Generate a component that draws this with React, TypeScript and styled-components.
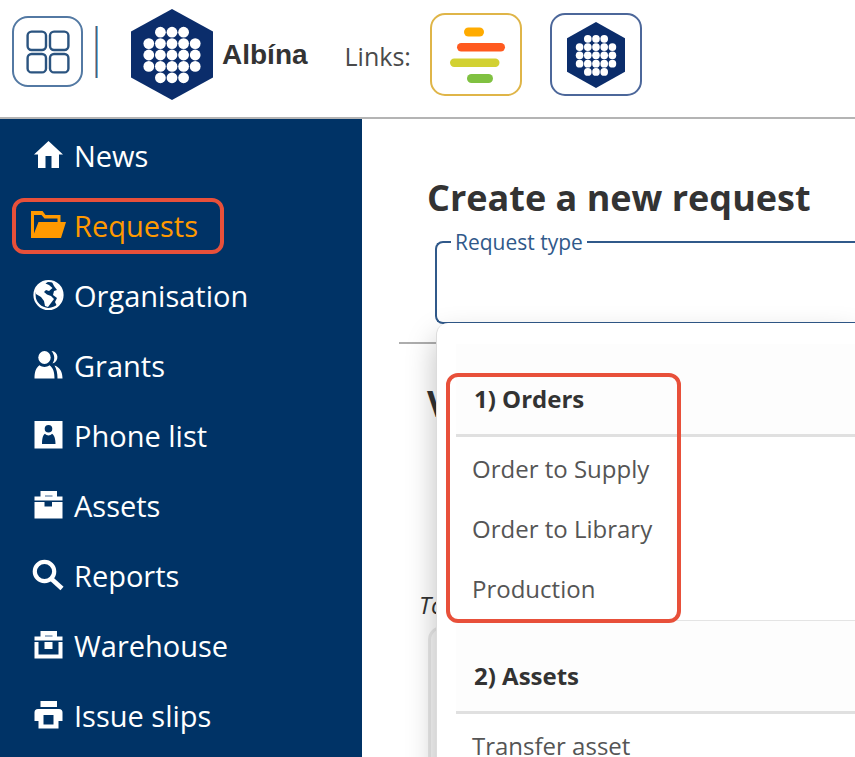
import React from 'react';
import styled, { createGlobalStyle } from 'styled-components';

const NAVY = '#003366';
const LINE_BLUE = '#30598a';
const MARK = '#e8503a';

const GlobalStyle = createGlobalStyle`
  * { box-sizing: border-box; }
  html, body { margin: 0; }
  body {
    background: #fff;
    color: #333;
    font-family: "Open Sans", "Noto Sans", sans-serif;
    overflow: hidden;
  }
`;

const Page = styled.div`
  height: 100vh;
  display: flex;
  flex-direction: column;
`;

const Header = styled.header`
  display: flex;
  align-items: center;
  padding: 9px 12px 17px;
  border-bottom: 2px solid #b4b4b4;
  flex-shrink: 0;
`;

const HeaderGroup = styled.div<{ $gap: number; $before?: number; $lift?: number }>`
  display: flex;
  align-items: center;
  gap: ${(p) => p.$gap}px;
  margin-left: ${(p) => p.$before ?? 0}px;
  padding-bottom: ${(p) => p.$lift ?? 0}px;
`;

const AppsButton = styled.button`
  display: grid;
  place-items: center;
  width: 71px;
  height: 71px;
  padding: 0;
  background: #fff;
  border: 2px solid #5379a3;
  border-radius: 16px;
`;

const Divider = styled.span`
  width: 3px;
  height: 52px;
  background: #45617f;
  border-left: 1px solid #cba394;
  border-right: 1px solid #5fb4e6;
`;

const Brand = styled.strong`
  font: bold 28px/36px "Liberation Sans", Arial, sans-serif;
`;

const LinksLabel = styled.span`
  padding-top: 2px;
  font-size: 25px;
  line-height: 36px;
  color: #4a4a4a;
`;

const LinkTile = styled.a<{ $tone: string }>`
  display: grid;
  place-items: center;
  width: 92px;
  height: 83px;
  border: 2px solid ${(p) => p.$tone};
  border-radius: 15px;
`;

const Body = styled.div`
  display: flex;
  flex: 1;
  min-height: 0;
`;

const Sidebar = styled.nav`
  width: 362px;
  flex-shrink: 0;
  padding: 9px 12px;
  background: ${NAVY};
  overflow: hidden;
`;

const NavList = styled.ul`
  display: flex;
  flex-direction: column;
  align-items: flex-start;
  gap: 14px;
  margin: 0;
  padding: 0;
  list-style: none;
`;

const NavLink = styled.a<{ $active?: boolean }>`
  display: flex;
  align-items: center;
  gap: 8px;
  height: 56px;
  padding: 0 22px 0 15px;
  border: 4px solid ${(p) => (p.$active ? MARK : 'transparent')};
  border-radius: 12px;
  color: ${(p) => (p.$active ? '#ff9900' : '#fff')};
  font-size: 29px;
  line-height: 40px;
  text-decoration: none;
  white-space: nowrap;

  svg { flex-shrink: 0; margin-bottom: 2px; }
`;

const Main = styled.main`
  position: relative;
  flex: 1;
  min-width: 0;
  padding: 54px 0 0 37px;
  overflow: hidden;
`;

const Title = styled.h1`
  margin: 0 0 0 28px;
  font-size: 36px;
  line-height: 50px;
  white-space: nowrap;
`;

const Field = styled.fieldset`
  height: 93px;
  margin: 8px 0 0 36px;
  padding: 0 0 0 14px;
  border: 2px solid ${LINE_BLUE};
  border-right: 0;
  border-radius: 8px 0 0 8px;
`;

const Legend = styled.legend`
  padding: 0 4px;
  color: ${LINE_BLUE};
  font-size: 21px;
  line-height: 22px;
`;

const RequestInput = styled.input`
  width: 100%;
  height: 60px;
  padding: 0;
  border: 0;
  outline: 0;
  background: transparent;
  color: #333;
  font: 24px/32px "Open Sans", sans-serif;
`;

const Rule = styled.hr`
  height: 2px;
  margin: 18px 0 0;
  border: 0;
  background: #adadad;
`;

const SectionTitle = styled.h2`
  margin: 35px 0 0 28px;
  font-size: 36px;
  line-height: 50px;
`;

const Total = styled.p`
  margin: 160px 0 0 20px;
  font-size: 24px;
  line-height: 32px;
  font-style: italic;
`;

const Card = styled.section`
  height: 200px;
  margin: 5px 0 0 29px;
  border: 3px solid #e9e9e9;
  border-radius: 14px;
  background: #f8f8f8;
`;

const Dropdown = styled.div`
  position: absolute;
  top: 204px;
  left: 74px;
  right: 0;
  padding: 21px 0 0 19px;
  background: #fff;
  border-left: 1px solid #dcdcdc;
  border-radius: 12px 0 0 0;
  box-shadow: 0 14px 30px rgba(0, 0, 0, 0.25);
`;

const Group = styled.section`
  position: relative;
  border-bottom: 1px solid #e4e4e4;
`;

const GroupTitle = styled.h3`
  margin: 0;
  padding: 39px 0 19px 18px;
  background: #fdfdfd;
  border-bottom: 3px solid #e0e0e0;
  font-size: 24px;
  line-height: 32px;
`;

const Options = styled.ul`
  margin: 0;
  padding: 2px 0 1px;
  list-style: none;
`;

const Option = styled.button`
  display: block;
  width: 100%;
  height: 60px;
  padding: 0 0 0 16px;
  border: 0;
  background: transparent;
  color: #555;
  font: 24px/32px "Open Sans", sans-serif;
  text-align: left;
  white-space: nowrap;
`;

const GroupMark = styled.span`
  position: absolute;
  z-index: 1;
  inset: 29px auto -3px -10px;
  width: 235px;
  border: 4px solid ${MARK};
  border-radius: 12px;
  pointer-events: none;
`;

const HEX_DOTS = [-2, -1, 0, 1, 2].flatMap((r) =>
  [-2, -1, 0, 1, 2].filter((c) => Math.abs(r) < 2 || Math.abs(c) < 2).map((c) => [c, r])
);

function HexLogo({ width, height }: { width: number; height: number }) {
  return (
    <svg width={width} height={height} viewBox="0 0 82 91" preserveAspectRatio="none" aria-hidden="true">
      <path d="M41 0 82 22.5V68.5L41 91 0 68.5V22.5Z" fill="#0b2d6b" />
      {HEX_DOTS.map(([c, r]) => (
        <circle key={`${c}:${r}`} cx={41 + c * 11.6} cy={46 + r * 11.4} r="5.4" fill="#fff" />
      ))}
    </svg>
  );
}

function AppsIcon() {
  return (
    <svg width="44" height="44" viewBox="0 0 44 44" fill="none" stroke="#2b5480" strokeWidth="2.4" aria-hidden="true">
      <rect x="1.6" y="1.6" width="18.4" height="18.4" rx="4" />
      <rect x="24" y="1.6" width="18.4" height="18.4" rx="4" />
      <rect x="1.6" y="24" width="18.4" height="18.4" rx="4" />
      <rect x="24" y="24" width="18.4" height="18.4" rx="4" />
    </svg>
  );
}

function BarsLogo() {
  return (
    <svg width="60" height="56" viewBox="0 0 60 56" aria-hidden="true">
      <rect x="18" y="0.5" width="20" height="9" rx="4.5" fill="#ffab00" />
      <rect x="11" y="16" width="48" height="8.5" rx="4.2" fill="#ff5a1f" />
      <rect x="4" y="31.5" width="49.5" height="8.5" rx="4.2" fill="#d2d132" />
      <rect x="21" y="47" width="26" height="9" rx="4.5" fill="#80c141" />
    </svg>
  );
}

const ICONS: Record<string, React.ReactNode> = {
  home: <path d="M17.5 2 32 15.5H28V29H20.5V17H14.5V29H7V15.5H3Z" />,
  folder: (
    <path
      fillRule="evenodd"
      d="M0 2H11.5L14.5 6H29.5V13H35L30 29H0ZM3 24.5 7.5 13H26.5V9.5H13.5L10.5 6H3Z"
    />
  ),
  globe: (
    <>
      <circle cx="17.5" cy="16" r="14" fill="none" stroke="currentColor" strokeWidth="2.2" />
      <path d="M5 9C8 4 13 2 18 2L14.5 4.5 18 6 21.5 9 18 12 15 11 13 13 16 15.5 20 17 23 20 20 24 17 28 14 27 13 22 10 18 5 15Z" />
      <path d="M21 3C27 5 30.5 9 31.5 14L30 22 26 27 24 23 26 19 22 16 23 12 26 11 23 7Z" />
    </>
  ),
  users: (
    <>
      <ellipse cx="13.5" cy="8.5" rx="6.2" ry="6.5" />
      <path d="M3.5 29.5C3.5 23 5 18.5 8.5 16.2 11.5 18.5 15.5 18.5 18.5 16.2 22 18.5 23.5 23 23.5 29.5Z" />
      <path d="M20.5 2C28 2.5 28.5 12.5 21.5 14.5 24 11 24 6 20.5 2ZM23.5 16.5C29 18.5 31.5 23 31.5 29.5H26.5C26.5 24 25.5 20 23.5 16.5Z" />
    </>
  ),
  contact: (
    <path
      fillRule="evenodd"
      d="M3.5 2H31.5V29.5H3.5ZM17.5 6A3.8 3.8 0 1 0 17.5 13.6 3.8 3.8 0 1 0 17.5 6ZM11 25H24.5C24.5 19 23 16 21 14.8 19 17 16 17 14 14.8 12 16 11 19 11 25Z"
    />
  ),
  toolbox: (
    <>
      <path d="M9.5 2H26V7.5H31.5V11.5H3.5V7.5H9.5Z" />
      <rect x="14" y="6" width="7.5" height="2" fill="#9fb3c9" />
      <path d="M3.5 13H13.5V17.5H21V13H31.5V29.5H3.5Z" />
    </>
  ),
  search: (
    <>
      <circle cx="13.5" cy="12.5" r="9.7" fill="none" stroke="currentColor" strokeWidth="4.2" />
      <path d="M20 19.5 31 29.5" stroke="currentColor" strokeWidth="4.6" />
    </>
  ),
  crate: (
    <>
      <path d="M9.5 2H26V7.5H31.5V11.5H3.5V7.5H9.5Z" />
      <rect x="14" y="6" width="7.5" height="2" fill="#9fb3c9" />
      <path d="M3.5 13H7.5V25.5H27.5V13H31.5V29.5H3.5Z" />
      <rect x="13.5" y="13" width="8" height="7" />
    </>
  ),
  printer: (
    <path
      fillRule="evenodd"
      d="M9.5 2H26V8H9.5ZM7 10H28Q31.5 10 31.5 13.5V22H27.5V29.5H7.5V22H3.5V13.5Q3.5 10 7 10ZM12.5 16V25.5H22.5V16Z"
    />
  ),
};

const NAV = [
  ['News', 'home'],
  ['Requests', 'folder'],
  ['Organisation', 'globe'],
  ['Grants', 'users'],
  ['Phone list', 'contact'],
  ['Assets', 'toolbox'],
  ['Reports', 'search'],
  ['Warehouse', 'crate'],
  ['Issue slips', 'printer'],
];

const GROUPS = [
  { title: '1) Orders', options: ['Order to Supply', 'Order to Library', 'Production'], marked: true },
  { title: '2) Assets', options: ['Transfer asset'], marked: false },
];

export default function App() {
  return (
    <Page>
      <GlobalStyle />
      <Header>
        <HeaderGroup $gap={12} $lift={6}>
          <AppsButton type="button" aria-label="Applications">
            <AppsIcon />
          </AppsButton>
          <Divider />
        </HeaderGroup>
        <HeaderGroup $gap={9} $before={33}>
          <HexLogo width={82} height={91} />
          <Brand>Albína</Brand>
        </HeaderGroup>
        <HeaderGroup $gap={19} $before={37}>
          <LinksLabel>Links:</LinksLabel>
          <HeaderGroup $gap={28}>
            <LinkTile href="#bars" aria-label="Bars" $tone="#dfb548">
              <BarsLogo />
            </LinkTile>
            <LinkTile href="#albina" aria-label="Albína" $tone="#4c679a">
              <HexLogo width={58} height={66} />
            </LinkTile>
          </HeaderGroup>
        </HeaderGroup>
      </Header>
      <Body>
        <Sidebar>
          <NavList>
            {NAV.map(([label, icon]) => (
              <li key={label}>
                <NavLink href={`#${icon}`} $active={label === 'Requests'}>
                  <svg width="35" height="32" viewBox="0 0 35 32" fill="currentColor" aria-hidden="true">
                    {ICONS[icon]}
                  </svg>
                  {label}
                </NavLink>
              </li>
            ))}
          </NavList>
        </Sidebar>
        <Main>
          <Title>Create a new request</Title>
          <Field>
            <Legend>
              <label htmlFor="request-type">Request type</label>
            </Legend>
            <RequestInput id="request-type" type="text" role="combobox" aria-expanded="true" aria-controls="request-options" />
          </Field>
          <Rule />
          <SectionTitle>V</SectionTitle>
          <Total>To</Total>
          <Card />
          <Dropdown id="request-options">
            {GROUPS.map((group) => (
              <Group key={group.title}>
                <GroupTitle>{group.title}</GroupTitle>
                <Options>
                  {group.options.map((option) => (
                    <li key={option}>
                      <Option type="button">{option}</Option>
                    </li>
                  ))}
                </Options>
                {group.marked && <GroupMark />}
              </Group>
            ))}
          </Dropdown>
        </Main>
      </Body>
    </Page>
  );
}
